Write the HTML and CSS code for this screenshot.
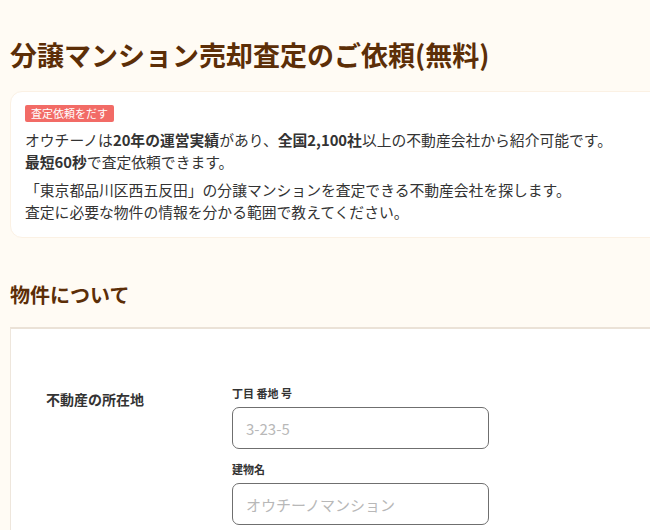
FILE: index.html
```html
<!DOCTYPE html>
<html lang="ja">
<head>
    <meta charset="UTF-8">
    <meta name="viewport" content="width=device-width, initial-scale=1.0">
    <title>分譲マンション売却査定のご依頼(無料)</title>
    <link rel="stylesheet" href="styles.css">
</head>
<body>
    <div class="container">
        <h1 class="page_title">分譲マンション売却査定のご依頼(無料)</h1>

        <div class="intro">
            <div class="badge_wrap"><span class="badge">査定依頼をだす</span></div>
            <p>オウチーノは<b>20年の運営実績</b>があり、<b>全国2,100社</b>以上の不動産会社から紹介可能です。<br><b>最短60秒</b>で査定依頼できます。</p>
            <p>「東京都品川区西五反田」の分譲マンションを査定できる不動産会社を探します。<br>査定に必要な物件の情報を分かる範囲で教えてください。</p>
        </div>

        <h2 class="section_title">物件について</h2>

        <div class="form_box">
            <div class="form_row">
                <div class="row_label">不動産の所在地</div>
                <div class="row_fields">
                    <label class="field_label" for="banchi">丁目 番地 号</label>
                    <input type="text" id="banchi" class="text_input" placeholder="3-23-5">
                    <label class="field_label" for="building">建物名</label>
                    <input type="text" id="building" class="text_input" placeholder="オウチーノマンション">
                </div>
            </div>
        </div>
    </div>
</body>
</html>
```

FILE: styles.css
```css
*{margin:0; padding:0; box-sizing:border-box;}
body{
    background-color:#fffbf4;
    font-family:"Noto Sans CJK JP", "Noto Sans", sans-serif;
    color:#333;
}

.container{padding:0 0 0 10px; overflow:hidden;}

.page_title{
    margin-top:35px;
    font-size:27px;
    line-height:40px;
    font-weight:bold;
    color:#5c2e07;
}

.intro{
    margin-top:16px;
    margin-right:-20px;
    padding:13px 14px 14px 14px;
    background-color:#fff;
    border:1px solid #fbf1e4;
    border-radius:12px;
}
.intro .badge_wrap{line-height:17px; height:17px;}
.intro .badge{
    display:inline-block;
    padding:0 6px;
    height:17px;
    line-height:17px;
    font-size:11px;
    color:#fff;
    background-color:#f26b66;
    border-radius:2px;
    vertical-align:top;
}
.intro p{
    margin-top:7px;
    font-size:14.8px;
    line-height:22px;
}
.intro p + p{margin-top:6px;}
.intro b{font-weight:bold;}

.section_title{
    margin-top:42px;
    font-size:20px;
    line-height:30px;
    font-weight:bold;
    color:#5c2e07;
}

.form_box{
    margin-top:17px;
    margin-right:-20px;
    height:260px;
    padding:56px 0 0 35px;
    background-color:#fff;
    border:1px solid #eee6dc;
    border-top:2px solid #ebe2d7;
}

.form_row{display:flex;}
.row_label{
    width:186px;
    padding-top:4px;
    font-size:14px;
    font-weight:bold;
    line-height:20px;
}
.row_fields{display:flex; flex-direction:column; width:257px;}
.field_label{
    font-size:11px;
    font-weight:bold;
    line-height:16px;
}
.text_input{
    margin:6px 0 12px 0;
    height:42px;
    padding:0 13px;
    border:1px solid #6f6f6f;
    border-radius:7px;
    font-family:inherit;
    font-size:15px;
    color:#333;
    background-color:#fff;
}
.text_input::placeholder{color:#b8b8b8;}
```
